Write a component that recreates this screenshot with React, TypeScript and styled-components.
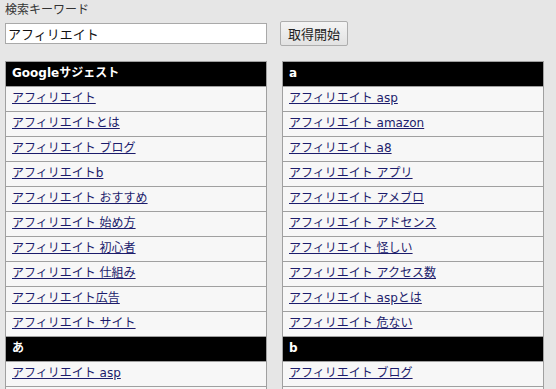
import React from "react";
import styled, { createGlobalStyle } from "styled-components";

const Global = createGlobalStyle`
  html, body {
    margin: 0;
    padding: 0;
    background: #e6e6e6;
  }
  body {
    font-family: "DejaVu Sans", "Noto Sans CJK JP", sans-serif;
    font-size: 12px;
    color: #333;
  }
`;

const Page = styled.div`
  padding: 2px 5px 0 5px;
`;

const Label = styled.div`
  font-size: 12px;
  line-height: 16px;
  color: #333;
  height: 17px;
`;

const SearchRow = styled.div`
  display: flex;
  align-items: center;
  gap: 13px;
  height: 28px;
`;

const KeywordInput = styled.input`
  box-sizing: border-box;
  width: 262px;
  height: 21px;
  margin: 0;
  padding: 0 2px;
  border: 1px solid #a9a9a9;
  background: #fff;
  font-family: "DejaVu Sans", "Noto Sans CJK JP", sans-serif;
  font-size: 13px;
  color: #111;
  outline: none;
`;

const StartButton = styled.button`
  box-sizing: border-box;
  width: 68px;
  height: 25px;
  margin: 0;
  padding: 0;
  border: 1px solid #adadad;
  border-radius: 2px;
  background: linear-gradient(#f4f4f4, #e2e2e2);
  font-family: "Noto Sans CJK JP", sans-serif;
  font-size: 13px;
  color: #222;
`;

const Columns = styled.div`
  display: grid;
  grid-template-columns: 262px 262px;
  column-gap: 15px;
  margin-top: 14px;
  align-items: start;
`;

const Table = styled.table`
  width: 100%;
  border-collapse: collapse;
  border: 1px solid #a0a0a0;
`;

const HeadCell = styled.th`
  height: 21px;
  padding: 0 6px 3px;
  line-height: 16px;
  text-align: left;
  background: #000;
  color: #fff;
  font-weight: bold;
  font-size: 12px;
  border: 1px solid #a0a0a0;
`;

const Cell = styled.td`
  height: 21px;
  padding: 0 6px 3px;
  line-height: 16px;
  background: #f7f7f7;
  border: 1px solid #a0a0a0;
  font-size: 12px;
`;

const Link = styled.a`
  color: #1c1c6c;
  text-decoration: underline;
`;

type Group = { title: string; items: string[] };

const left: Group[] = [
  {
    title: "Googleサジェスト",
    items: [
      "アフィリエイト",
      "アフィリエイトとは",
      "アフィリエイト ブログ",
      "アフィリエイトb",
      "アフィリエイト おすすめ",
      "アフィリエイト 始め方",
      "アフィリエイト 初心者",
      "アフィリエイト 仕組み",
      "アフィリエイト広告",
      "アフィリエイト サイト",
    ],
  },
  { title: "あ", items: ["アフィリエイト asp", ""] },
];

const right: Group[] = [
  {
    title: "a",
    items: [
      "アフィリエイト asp",
      "アフィリエイト amazon",
      "アフィリエイト a8",
      "アフィリエイト アプリ",
      "アフィリエイト アメブロ",
      "アフィリエイト アドセンス",
      "アフィリエイト 怪しい",
      "アフィリエイト アクセス数",
      "アフィリエイト aspとは",
      "アフィリエイト 危ない",
    ],
  },
  { title: "b", items: ["アフィリエイト ブログ", ""] },
];

const SuggestTable = ({ groups }: { groups: Group[] }) => (
  <Table>
    <tbody>
      {groups.map((g) => (
        <React.Fragment key={g.title}>
          <tr>
            <HeadCell>{g.title}</HeadCell>
          </tr>
          {g.items.map((item, i) => (
            <tr key={i}>
              <Cell>{item && <Link href="#">{item}</Link>}</Cell>
            </tr>
          ))}
        </React.Fragment>
      ))}
    </tbody>
  </Table>
);

export default function App() {
  return (
    <>
      <Global />
      <Page>
        <Label>検索キーワード</Label>
        <SearchRow>
          <KeywordInput defaultValue="アフィリエイト" />
          <StartButton>取得開始</StartButton>
        </SearchRow>
        <Columns>
          <SuggestTable groups={left} />
          <SuggestTable groups={right} />
        </Columns>
      </Page>
    </>
  );
}
